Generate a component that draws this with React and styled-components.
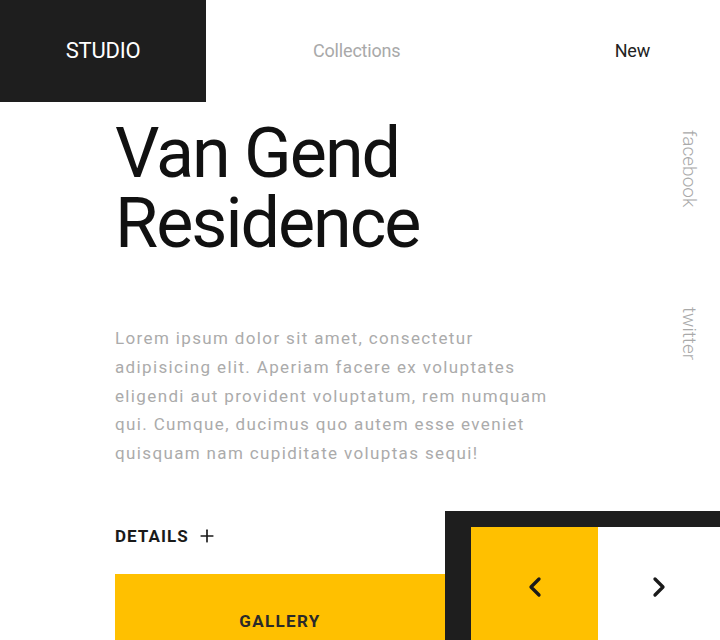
import React from "react";
import styled, { createGlobalStyle } from "styled-components";
import { ChevronLeft, ChevronRight, Plus } from "lucide-react";

const Global = createGlobalStyle`
  html, body {
    margin: 0;
    padding: 0;
    background: #ffffff;
    overflow: hidden;
  }
  body {
    font-family: Roboto, "Liberation Sans", sans-serif;
  }
`;

const Page = styled.div`
  width: 720px;
  height: 640px;
  overflow: hidden;
  display: flex;
  flex-direction: column;
`;

const Header = styled.header`
  display: flex;
  height: 102px;
  flex-shrink: 0;
`;

const Logo = styled.div`
  width: 206px;
  background: #1e1e1e;
  color: #ffffff;
  display: flex;
  align-items: center;
  justify-content: center;
  padding-bottom: 2px;
  font-size: 22px;
  letter-spacing: -0.01em;
`;

const Nav = styled.nav`
  flex: 1;
  display: flex;
  align-items: center;
  justify-content: space-between;
  padding: 0 70px 2px 107px;
`;

const NavLink = styled.a`
  font-size: 18px;
  letter-spacing: -0.01em;
  color: ${(p) => (p.$active ? "#222222" : "#a9a9a9")};
  text-decoration: none;
`;

const Body = styled.section`
  display: flex;
  flex-shrink: 0;
`;

const Content = styled.div`
  padding-left: 115px;
  flex: 1;
`;

const Title = styled.h1`
  margin: 16px 0 0;
  font-size: 70px;
  font-weight: 400;
  line-height: 1;
  letter-spacing: -2px;
  color: #111111;
`;

const Lead = styled.p`
  margin: 66px 0 0;
  width: 440px;
  font-size: 17px;
  line-height: 28.8px;
  letter-spacing: 0.08em;
  color: #ababab;
`;

const Social = styled.div`
  width: 42px;
  padding-top: 28px;
  display: flex;
  flex-direction: column;
  align-items: flex-start;
  gap: 100px;
`;

const SocialLink = styled.a`
  writing-mode: vertical-rl;
  font-size: 19px;
  font-weight: 300;
  color: #a9a9a9;
  text-decoration: none;
`;

const Bottom = styled.section`
  display: flex;
  margin-top: 43px;
  flex: 1;
`;

const LeftCol = styled.div`
  margin-left: 115px;
  width: 330px;
  padding-top: 15px;
  display: flex;
  flex-direction: column;
`;

const Details = styled.button`
  all: unset;
  display: flex;
  align-items: center;
  gap: 8px;
  height: 20px;
  font-size: 17px;
  font-weight: 700;
  letter-spacing: 0.06em;
  color: #1a1a1a;
`;

const Gallery = styled.div`
  margin-top: 28px;
  flex: 1;
  background: #ffc000;
  display: flex;
  justify-content: center;
  padding-top: 37px;
  font-size: 17px;
  font-weight: 700;
  letter-spacing: 0.08em;
  color: #2a2a2a;
`;

const Slider = styled.div`
  flex: 1;
  background: #1e1e1e;
  padding: 16px 0 0 26px;
  display: flex;
  align-items: flex-start;
`;

const Arrow = styled.button`
  all: unset;
  height: 120px;
  width: ${(p) => (p.$primary ? "127px" : "auto")};
  flex: ${(p) => (p.$primary ? "none" : "1")};
  background: ${(p) => (p.$primary ? "#ffc000" : "#ffffff")};
  display: flex;
  align-items: center;
  justify-content: center;
  color: #1a1a1a;
`;

export default function App() {
  return (
    <Page>
      <Global />
      <Header>
        <Logo>STUDIO</Logo>
        <Nav>
          <NavLink href="#">Collections</NavLink>
          <NavLink href="#" $active>New</NavLink>
        </Nav>
      </Header>
      <Body>
        <Content>
          <Title>
            Van Gend
            <br />
            Residence
          </Title>
          <Lead>
            Lorem ipsum dolor sit amet, consectetur adipisicing elit. Aperiam
            facere ex voluptates eligendi aut provident voluptatum, rem numquam
            qui. Cumque, ducimus quo autem esse eveniet quisquam nam cupiditate
            voluptas sequi!
          </Lead>
        </Content>
        <Social>
          <SocialLink href="#">facebook</SocialLink>
          <SocialLink href="#">twitter</SocialLink>
        </Social>
      </Body>
      <Bottom>
        <LeftCol>
          <Details>
            DETAILS <Plus size={20} strokeWidth={2} />
          </Details>
          <Gallery>GALLERY</Gallery>
        </LeftCol>
        <Slider>
          <Arrow $primary>
            <ChevronLeft size={32} strokeWidth={2.5} />
          </Arrow>
          <Arrow>
            <ChevronRight size={32} strokeWidth={2.5} />
          </Arrow>
        </Slider>
      </Bottom>
    </Page>
  );
}
